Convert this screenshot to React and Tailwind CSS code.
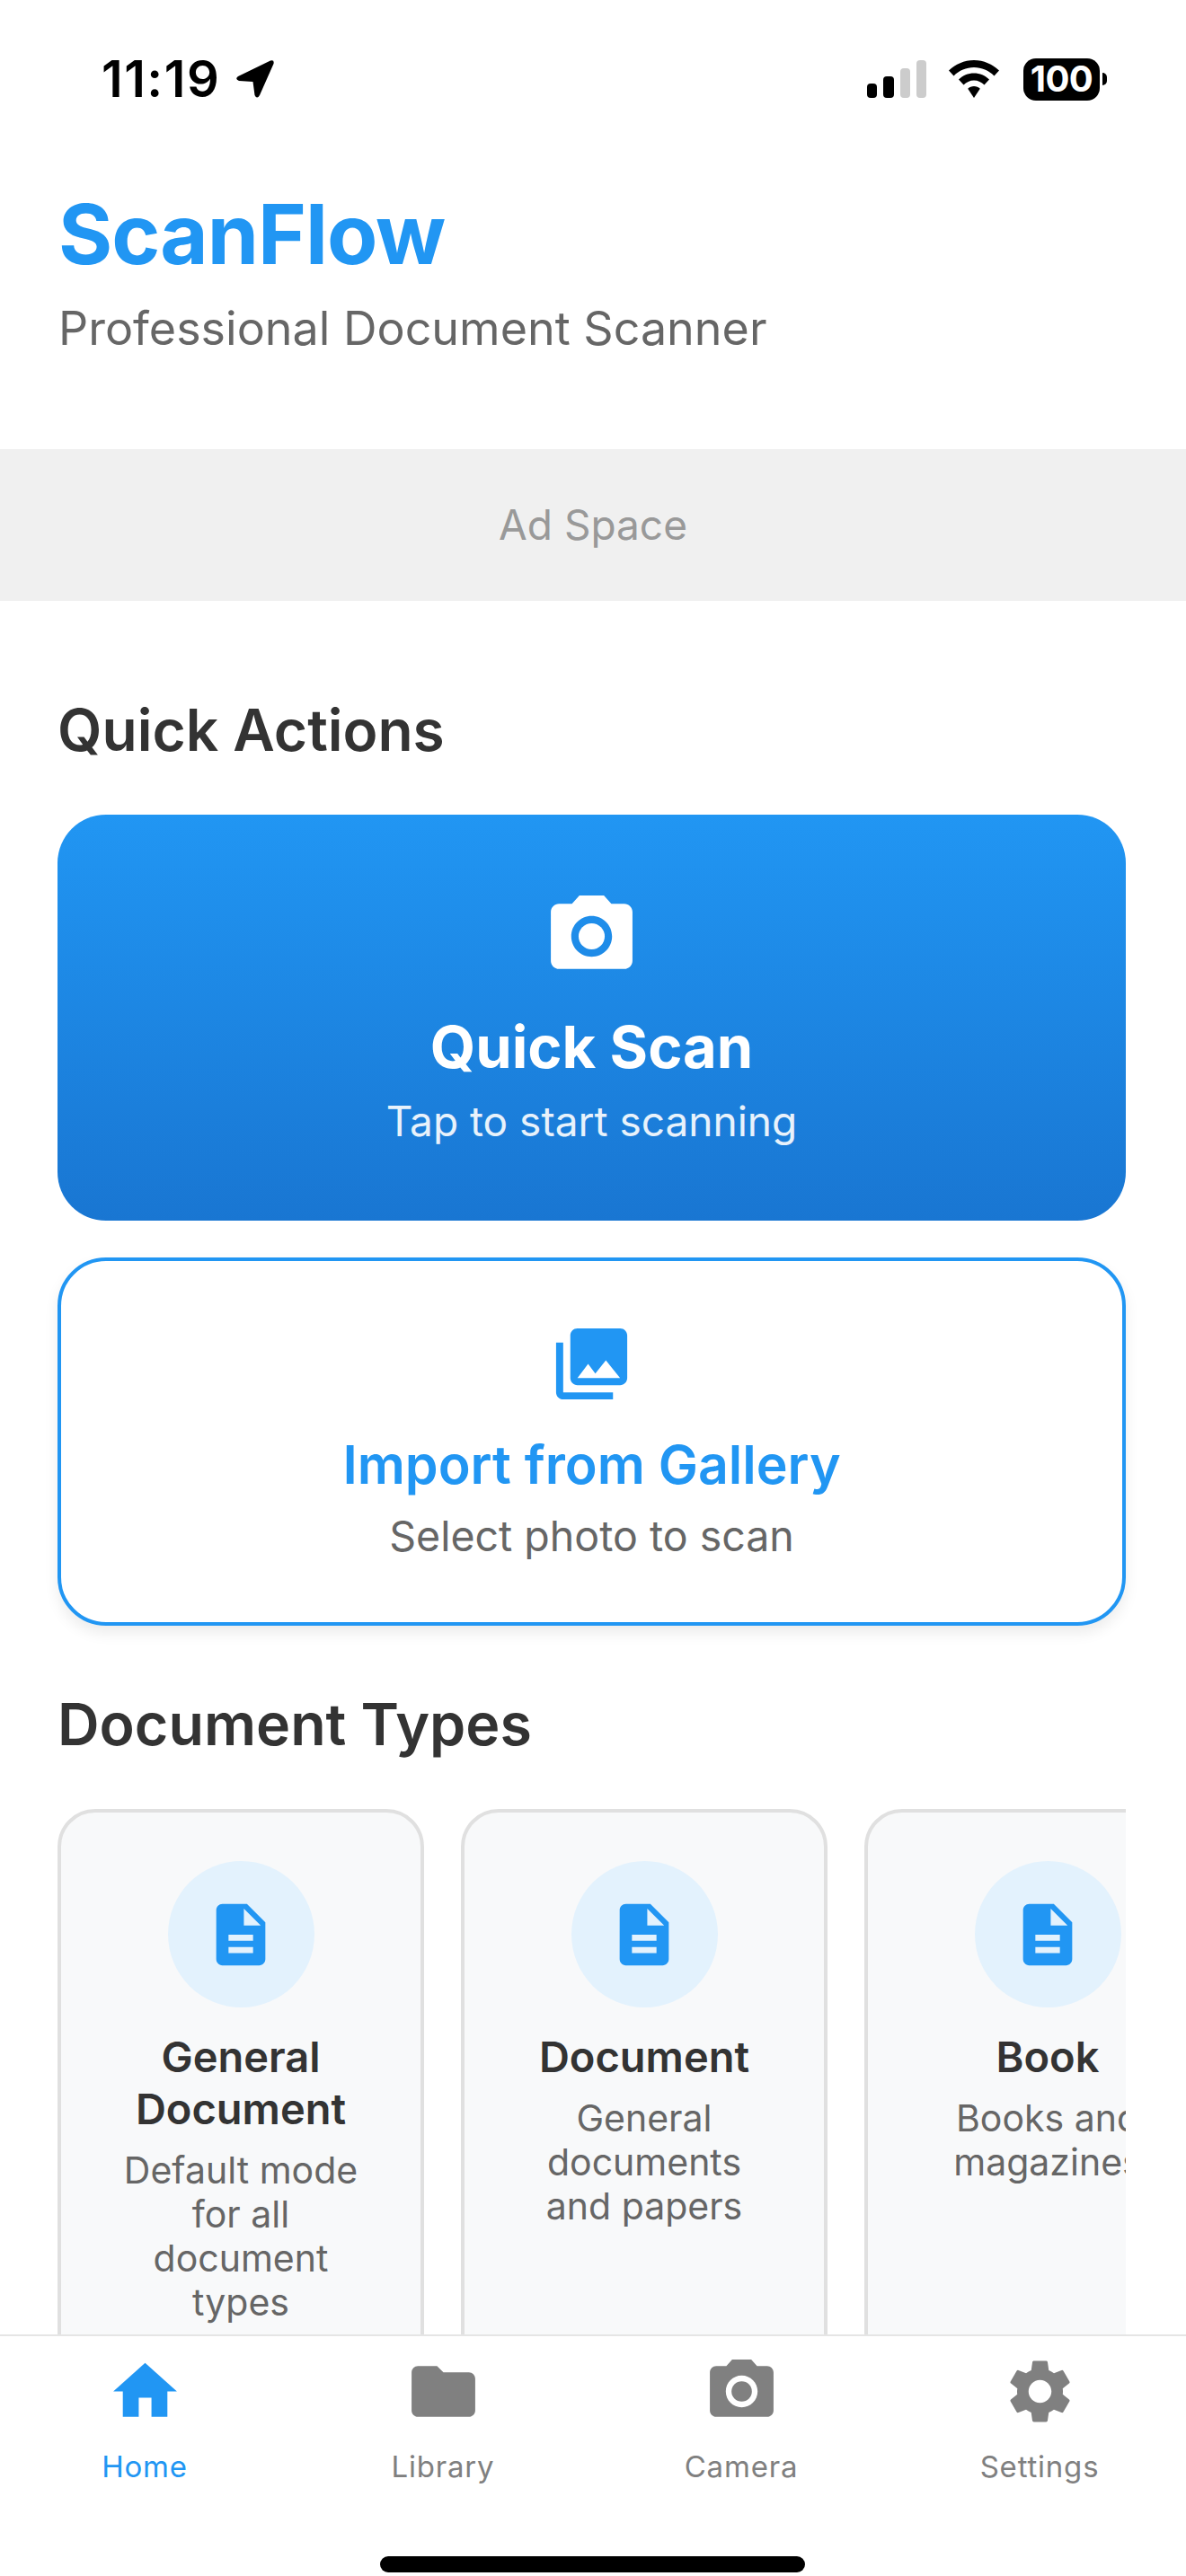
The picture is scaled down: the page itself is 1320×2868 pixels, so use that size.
import React from 'react';
import { MdHome, MdFolder, MdPhotoCamera, MdSettings, MdPhotoLibrary, MdDescription } from 'react-icons/md';

const docTypes = [
    { title: 'General Document', desc: 'Default mode for all document types' },
    { title: 'Document', desc: 'General documents and papers' },
    { title: 'Book', desc: 'Books and magazines' },
];

const tabs = [
    { label: 'Home', Icon: MdHome, active: true },
    { label: 'Library', Icon: MdFolder },
    { label: 'Camera', Icon: MdPhotoCamera },
    { label: 'Settings', Icon: MdSettings },
];

const StatusBar = () => (
    <div className="h-[176px] shrink-0 flex items-center pl-[113px] pr-[88px] text-black">
        <span className="text-[56px] leading-none font-semibold tracking-[1.5px]">11:19</span>
        <svg className="ml-[17px] w-[44px] h-[44px]" viewBox="0 0 44 44">
            <path d="M3 19 L39 1.5 Q43.5 0 42.5 5 L27 40 Q24 45 21.5 40 L19.5 25 L4 24 Q-1 22 3 19Z" fill="#000" />
        </svg>
        <div className="ml-auto flex items-center">
            <div className="flex items-end gap-[7px] h-[42px]">
                <div className="w-[11px] h-[16px] rounded-[4px] bg-black" />
                <div className="w-[12px] h-[24px] rounded-[4px] bg-black" />
                <div className="w-[11px] h-[33px] rounded-[4px] bg-[#cccccc]" />
                <div className="w-[11px] h-[42px] rounded-[4px] bg-[#cccccc]" />
            </div>
            <svg className="ml-[25px] w-[56px] h-[42px]" viewBox="0 0 56 42">
                <path d="M28 0 C39 0 48.500 4.500 56 11.500 L50.500 17.500 C44.500 11.500 36.500 8 28 8 C19.500 8 11.500 11.500 5.500 17.500 L0 11.500 C7.500 4.500 17 0 28 0Z" fill="#000" />
                <path d="M28 14.500 C34.500 14.500 40.500 17 45 21.500 L39.500 27.500 C36.500 24.500 32.500 22.500 28 22.500 C23.500 22.500 19.500 24.500 16.500 27.500 L11 21.500 C15.500 17 21.500 14.500 28 14.500Z" fill="#000" />
                <path d="M28 29 C30.500 29 33 30 34.800 31.800 L28 42 L21.200 31.800 C23 30 25.500 29 28 29Z" fill="#000" />
            </svg>
            <div className="ml-[27px] w-[85px] h-[47px] rounded-[14px] bg-black flex items-center justify-center text-white text-[40px] leading-none font-bold tracking-[-0.5px]">100</div>
            <div className="ml-[3px] w-[5px] h-[14px] rounded-r-full bg-black" />
        </div>
    </div>
);

const DocCard = ({ title, desc }) => (
    <div className="w-[408px] h-[700px] shrink-0 bg-[#f8f9fa] border-4 border-[#e0e0e0] rounded-[42px] pt-[54px] px-[56px] flex flex-col items-center text-center">
        <div className="w-[163px] h-[163px] shrink-0 rounded-full bg-[#e3f2fd] flex items-center justify-center">
            <MdDescription size={82} color="#2196f3" />
        </div>
        <div className="mt-[26px] text-[47px] leading-[58px] font-semibold text-[#333333]">{title}</div>
        <div className="mt-[15px] text-[41px] leading-[49px] text-[#666666]">{desc}</div>
    </div>
);

export default function App() {
    return (
        <div className="w-[1320px] h-[2868px] bg-white overflow-hidden flex flex-col font-['Inter',sans-serif]">
            <StatusBar />

            <div className="flex-1 min-h-0 overflow-hidden flex flex-col">
                {/* 헤더 */}
                <div className="h-[324px] shrink-0 pt-[33px] pl-[65px]">
                    <h1 className="text-[92px] leading-[104px] font-bold text-[#2196f3] tracking-[-1px]">ScanFlow</h1>
                    <p className="mt-[21px] text-[52px] leading-[64px] text-[#666666]">Professional Document Scanner</p>
                </div>

                <div className="h-[169px] shrink-0 bg-[#f0f0f0] flex items-center justify-center text-[46px] text-[#999999]">
                    Ad Space
                </div>

                <div className="pl-[64px] pr-[67px]">
                    <h2 className="mt-[106px] mb-[56px] text-[64px] leading-[76px] font-semibold text-[#333333]">Quick Actions</h2>

                    <div className="h-[452px] rounded-[54px] bg-gradient-to-b from-[#2196f3] to-[#1976d2] pt-[81px] flex flex-col items-center text-white">
                        <MdPhotoCamera size={109} color="#ffffff" />
                        <div className="mt-[31px] text-[65px] leading-[76px] font-bold">Quick Scan</div>
                        <div className="mt-[14px] text-[46px] leading-[60px] text-white/90">Tap to start scanning</div>
                    </div>

                    <div className="mt-[41px] h-[410px] rounded-[54px] bg-white border-4 border-[#2196f3] pt-[67px] flex flex-col items-center shadow-[0_8px_16px_rgba(0,0,0,0.08)]">
                        <MdPhotoLibrary size={95} color="#2196f3" />
                        <div className="mt-[29px] text-[59px] leading-[72px] font-semibold text-[#2196f3]">Import from Gallery</div>
                        <div className="mt-[13px] text-[46.500px] leading-[60px] text-[#666666]">Select photo to scan</div>
                    </div>

                    <h2 className="mt-[72px] mb-[56px] text-[64.500px] leading-[76px] font-semibold text-[#333333]">Document Types</h2>

                    <div className="flex gap-[41px] overflow-hidden">
                        {docTypes.map((d) => (
                            <DocCard key={d.title} title={d.title} desc={d.desc} />
                        ))}
                    </div>
                </div>
            </div>

            {/* 하단 탭 */}
            <div className="h-[269px] shrink-0 bg-white border-t-2 border-[#e5e5e5] flex flex-col">
                <div className="flex gap-[196px] pl-[93px] pt-[19px]">
                    {tabs.map(({ label, Icon, active }) => (
                        <div key={label} className="w-[136px] flex flex-col items-center">
                            <Icon size={85} color={active ? '#2196f3' : '#808080'} />
                            <span className={`mt-[19px] text-[33px] leading-[44px] tracking-[0.8px] ${active ? 'text-[#2196f3]' : 'text-[#808080]'}`}>{label}</span>
                        </div>
                    ))}
                </div>
                <div className="mt-[78px] ml-[423px] w-[473px] h-[18px] rounded-full bg-black" />
            </div>
        </div>
    );
}
